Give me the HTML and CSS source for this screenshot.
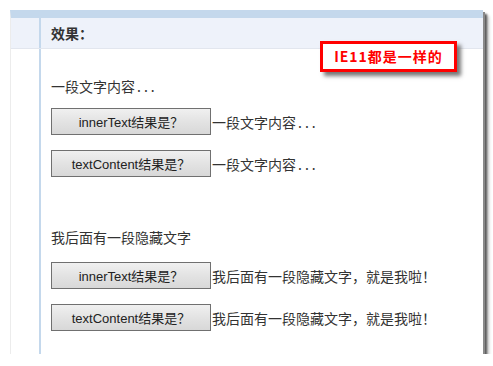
FILE: index.html
```html
<!doctype html>
<html>
<head>
<meta charset="utf-8">
<title>效果</title>
<link rel="stylesheet" href="styles.css">
</head>
<body>

<div class="frame">
<div class="head">
<div class="gutter"></div>
<div class="head-title">效果：</div>
</div>
<div class="main">
<div class="gutter"></div>
<div class="content">
<div class="line first">一段文字内容<span class="dots">...</span></div>
<div class="row"><button class="btn">innerText结果是？</button><span class="out">一段文字内容<span class="dots">...</span></span></div>
<div class="row"><button class="btn">textContent结果是？</button><span class="out">一段文字内容<span class="dots">...</span></span></div>
<div class="line hidden-row">我后面有一段隐藏文字</div>
<div class="row"><button class="btn">innerText结果是？</button><span class="out">我后面有一段隐藏文字，就是我啦！</span></div>
<div class="row"><button class="btn">textContent结果是？</button><span class="out">我后面有一段隐藏文字，就是我啦！</span></div>
</div>
</div>
</div>

<div class="note">IE11都是一样的</div>

</body>
</html>
```

FILE: styles.css
```css
html {
	background: #fff;
}

body {
	margin: 0;
	padding: 10px 0 0 10px;
	font-family: "Noto Sans CJK SC", "Liberation Sans", sans-serif;
	color: #333;
}

div.frame {
	box-sizing: border-box;
	width: 473px;
	height: 344px;
	border-top: 8px solid #c4d8ec;
	border-left: 1px solid #ececec;
	background: #fff;
	box-shadow: 2px 2px 0 #8a8a8a, 4px 4px 2px #5a5a5a, 6px 6px 3px #c8c8c8;
	display: flex;
	flex-direction: column;
	overflow: hidden;
}

div.head {
	height: 30px;
	flex: none;
	background: #eef2fa;
	border-bottom: 1px solid #e2e6ee;
	display: flex;
}

div.gutter {
	width: 28px;
	border-right: 2px solid #c4d8ec;
	flex: none;
}

div.head-title {
	padding-left: 10px;
	font-size: 14px;
	font-weight: bold;
	line-height: 30px;
}

div.main {
	flex: 1;
	min-height: 0;
	display: flex;
}

div.content {
	padding-left: 10px;
	padding-top: 27px;
	font-size: 14px;
}

div.line {
	height: 20px;
	line-height: 20px;
}

div.line.first {
	margin-bottom: 12px;
}

div.line.hidden-row {
	margin-top: 50px;
	margin-bottom: 15px;
}

span.dots {
	letter-spacing: 3px;
	padding-left: 2px;
}

div.row {
	display: flex;
	align-items: center;
	height: 27px;
	margin-bottom: 15px;
}

div.row:last-child {
	margin-bottom: 0;
}

button.btn {
	width: 160px;
	height: 27px;
	margin: 0;
	padding: 0;
	border: 1px solid #707070;
	background: linear-gradient(#f0f0f0, #e3e3e3 50%, #d8d8d8);
	font-family: "Liberation Sans", "Noto Sans CJK SC", sans-serif;
	font-size: 13px;
	color: #222;
}

span.out {
	padding-left: 1px;
	white-space: nowrap;
}

div.note {
	position: absolute;
	left: 320px;
	top: 41px;
	width: 131px;
	height: 25px;
	border: 3px solid #ff0000;
	background: #fff;
	box-shadow: 4px 4px 4px #777;
	color: #ff0000;
	font-size: 14px;
	font-weight: bold;
	letter-spacing: 1px;
	text-align: center;
	line-height: 25px;
}
```
